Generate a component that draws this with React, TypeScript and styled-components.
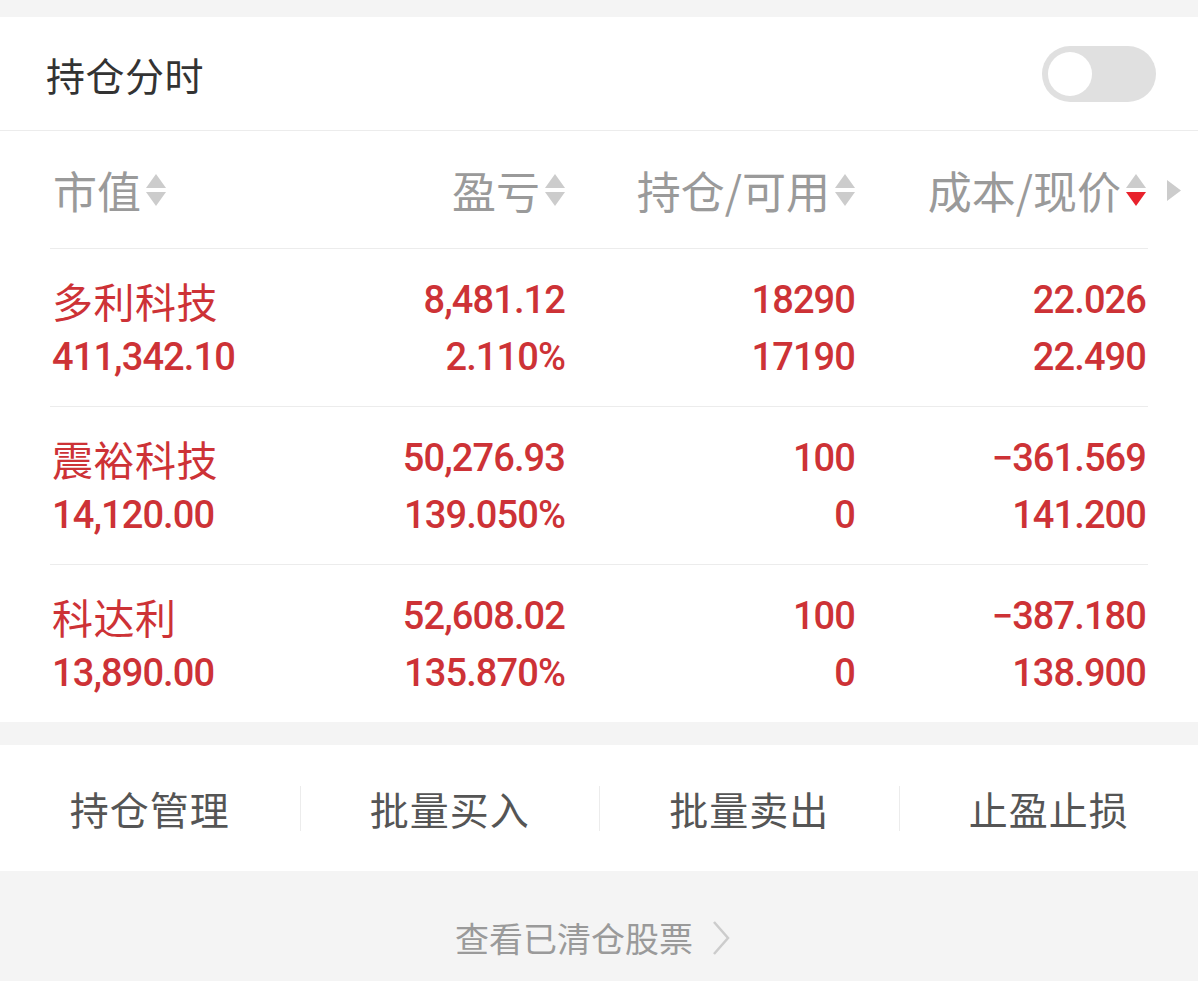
import React from "react";
import styled, { createGlobalStyle } from "styled-components";

const GlobalStyle = createGlobalStyle`
  html, body { margin: 0; padding: 0; background: #f4f4f4; }
  body { font-family: "Noto Sans CJK SC", "Noto Sans", sans-serif; }
`;

const Page = styled.div`
  width: 1198px;
  padding-top: 17px;
  background: #f4f4f4;
`;

const Card = styled.section`
  background: #fff;
`;

const TitleBar = styled.div`
  height: 113px;
  display: flex;
  align-items: center;
  justify-content: space-between;
  padding: 0 42px 0 46px;
  border-bottom: 1px solid #ececec;
`;

const Title = styled.h1`
  margin: 0;
  font-size: 39px;
  font-weight: 400;
  color: #333;
  letter-spacing: 0.5px;
`;

const Toggle = styled.div`
  width: 114px;
  height: 56px;
  border-radius: 28px;
  background: #e0e0e0;
  display: flex;
  align-items: center;
  padding: 0 6px;
  box-sizing: border-box;
`;

const Knob = styled.div`
  width: 44px;
  height: 44px;
  border-radius: 50%;
  background: #fff;
`;

const Table = styled.div`
  position: relative;
  padding: 0 50px;
`;

const Row = styled.div<{ $last?: boolean; $head?: boolean }>`
  display: grid;
  grid-template-columns: 240px 273px 290px 291px;
  padding: 0 2px;
  height: ${(p) => (p.$head ? 117 : 157)}px;
  align-items: center;
  border-bottom: ${(p) => (p.$last ? "none" : "1px solid #ececec")};
`;

const HeadCell = styled.div<{ $left?: boolean }>`
  display: flex;
  align-items: center;
  justify-content: ${(p) => (p.$left ? "flex-start" : "flex-end")};
  padding-left: ${(p) => (p.$left ? "1px" : "0")};
  font-size: 44px;
  color: #9a9a9a;
  white-space: nowrap;
`;

const SortIcon = styled.svg`
  width: 24px;
  height: 40px;
  margin-left: 3px;
  margin-right: -2px;
  flex: none;
`;

const MoreArrow = styled.svg`
  position: absolute;
  right: 16px;
  top: 48px;
  width: 16px;
  height: 23px;
`;

const Cell = styled.div<{ $left?: boolean }>`
  display: flex;
  flex-direction: column;
  align-items: ${(p) => (p.$left ? "flex-start" : "flex-end")};
  color: #cd3236;
  padding-top: 2px;
`;

const Line = styled.div<{ $cjk?: boolean }>`
  height: 57px;
  line-height: 57px;
  white-space: nowrap;
  font-family: ${(p) =>
    p.$cjk ? '"Noto Sans CJK SC", sans-serif' : 'Roboto, "Noto Sans", sans-serif'};
  font-size: ${(p) => (p.$cjk ? "41px" : "38px")};
  font-weight: ${(p) => (p.$cjk ? 400 : 500)};
  letter-spacing: ${(p) => (p.$cjk ? "0.5px" : "-0.9px")};
`;

const Gap = styled.div`
  height: 23px;
  background: #f4f4f4;
`;

const ActionBar = styled.nav`
  height: 126px;
  background: #fff;
  display: grid;
  grid-template-columns: repeat(4, 1fr);
  align-items: center;
`;

const Action = styled.div<{ $first?: boolean }>`
  height: 45px;
  line-height: 45px;
  text-align: center;
  font-size: 39px;
  color: #555;
  letter-spacing: 1px;
  border-left: ${(p) => (p.$first ? "none" : "1px solid #ececec")};
`;

const Footer = styled.div`
  height: 109px;
  display: flex;
  justify-content: center;
  align-items: flex-start;
  padding-top: 45px;
  box-sizing: border-box;
`;

const FooterLink = styled.div`
  display: flex;
  align-items: center;
  gap: 18px;
  margin-right: 12px;
  font-size: 34px;
  line-height: 44px;
  color: #9a9a9a;
`;

const Chevron = styled.svg`
  width: 20px;
  height: 36px;
`;

type Stock = { name: string; mv: string; pl: string; pct: string; hold: string; avail: string; cost: string; price: string };

const stocks: Stock[] = [
  { name: "多利科技", mv: "411,342.10", pl: "8,481.12", pct: "2.110%", hold: "18290", avail: "17190", cost: "22.026", price: "22.490" },
  { name: "震裕科技", mv: "14,120.00", pl: "50,276.93", pct: "139.050%", hold: "100", avail: "0", cost: "−361.569", price: "141.200" },
  { name: "科达利", mv: "13,890.00", pl: "52,608.02", pct: "135.870%", hold: "100", avail: "0", cost: "−387.180", price: "138.900" },
];

const Sort: React.FC<{ active?: boolean }> = ({ active }) => (
  <SortIcon viewBox="0 0 24 40">
    <polygon points="12,4 22,18 2,18" fill="#cccccc" />
    <polygon points="2,22 22,22 12,36" fill={active ? "#e8222c" : "#cccccc"} />
  </SortIcon>
);

export default function App() {
  return (
    <Page>
      <GlobalStyle />
      <Card>
        <TitleBar>
          <Title>持仓分时</Title>
          <Toggle>
            <Knob />
          </Toggle>
        </TitleBar>
        <Table>
          <Row $head>
            <HeadCell $left>
              市值
              <Sort />
            </HeadCell>
            <HeadCell>
              盈亏
              <Sort />
            </HeadCell>
            <HeadCell>
              持仓/可用
              <Sort />
            </HeadCell>
            <HeadCell>
              成本/现价
              <Sort active />
            </HeadCell>
          </Row>
          <MoreArrow viewBox="0 0 16 23">
            <polygon points="1,1 15,11.5 1,22" fill="#cccccc" />
          </MoreArrow>
          {stocks.map((s, i) => (
            <Row key={s.name} $last={i === stocks.length - 1}>
              <Cell $left>
                <Line $cjk>{s.name}</Line>
                <Line>{s.mv}</Line>
              </Cell>
              <Cell>
                <Line>{s.pl}</Line>
                <Line>{s.pct}</Line>
              </Cell>
              <Cell>
                <Line>{s.hold}</Line>
                <Line>{s.avail}</Line>
              </Cell>
              <Cell>
                <Line>{s.cost}</Line>
                <Line>{s.price}</Line>
              </Cell>
            </Row>
          ))}
        </Table>
      </Card>
      <Gap />
      <ActionBar>
        <Action $first>持仓管理</Action>
        <Action>批量买入</Action>
        <Action>批量卖出</Action>
        <Action>止盈止损</Action>
      </ActionBar>
      <Footer>
        <FooterLink>
          查看已清仓股票
          <Chevron viewBox="0 0 20 36">
            <polyline points="3,2 17,18 3,34" fill="none" stroke="#cccccc" strokeWidth="2.5" />
          </Chevron>
        </FooterLink>
      </Footer>
    </Page>
  );
}
